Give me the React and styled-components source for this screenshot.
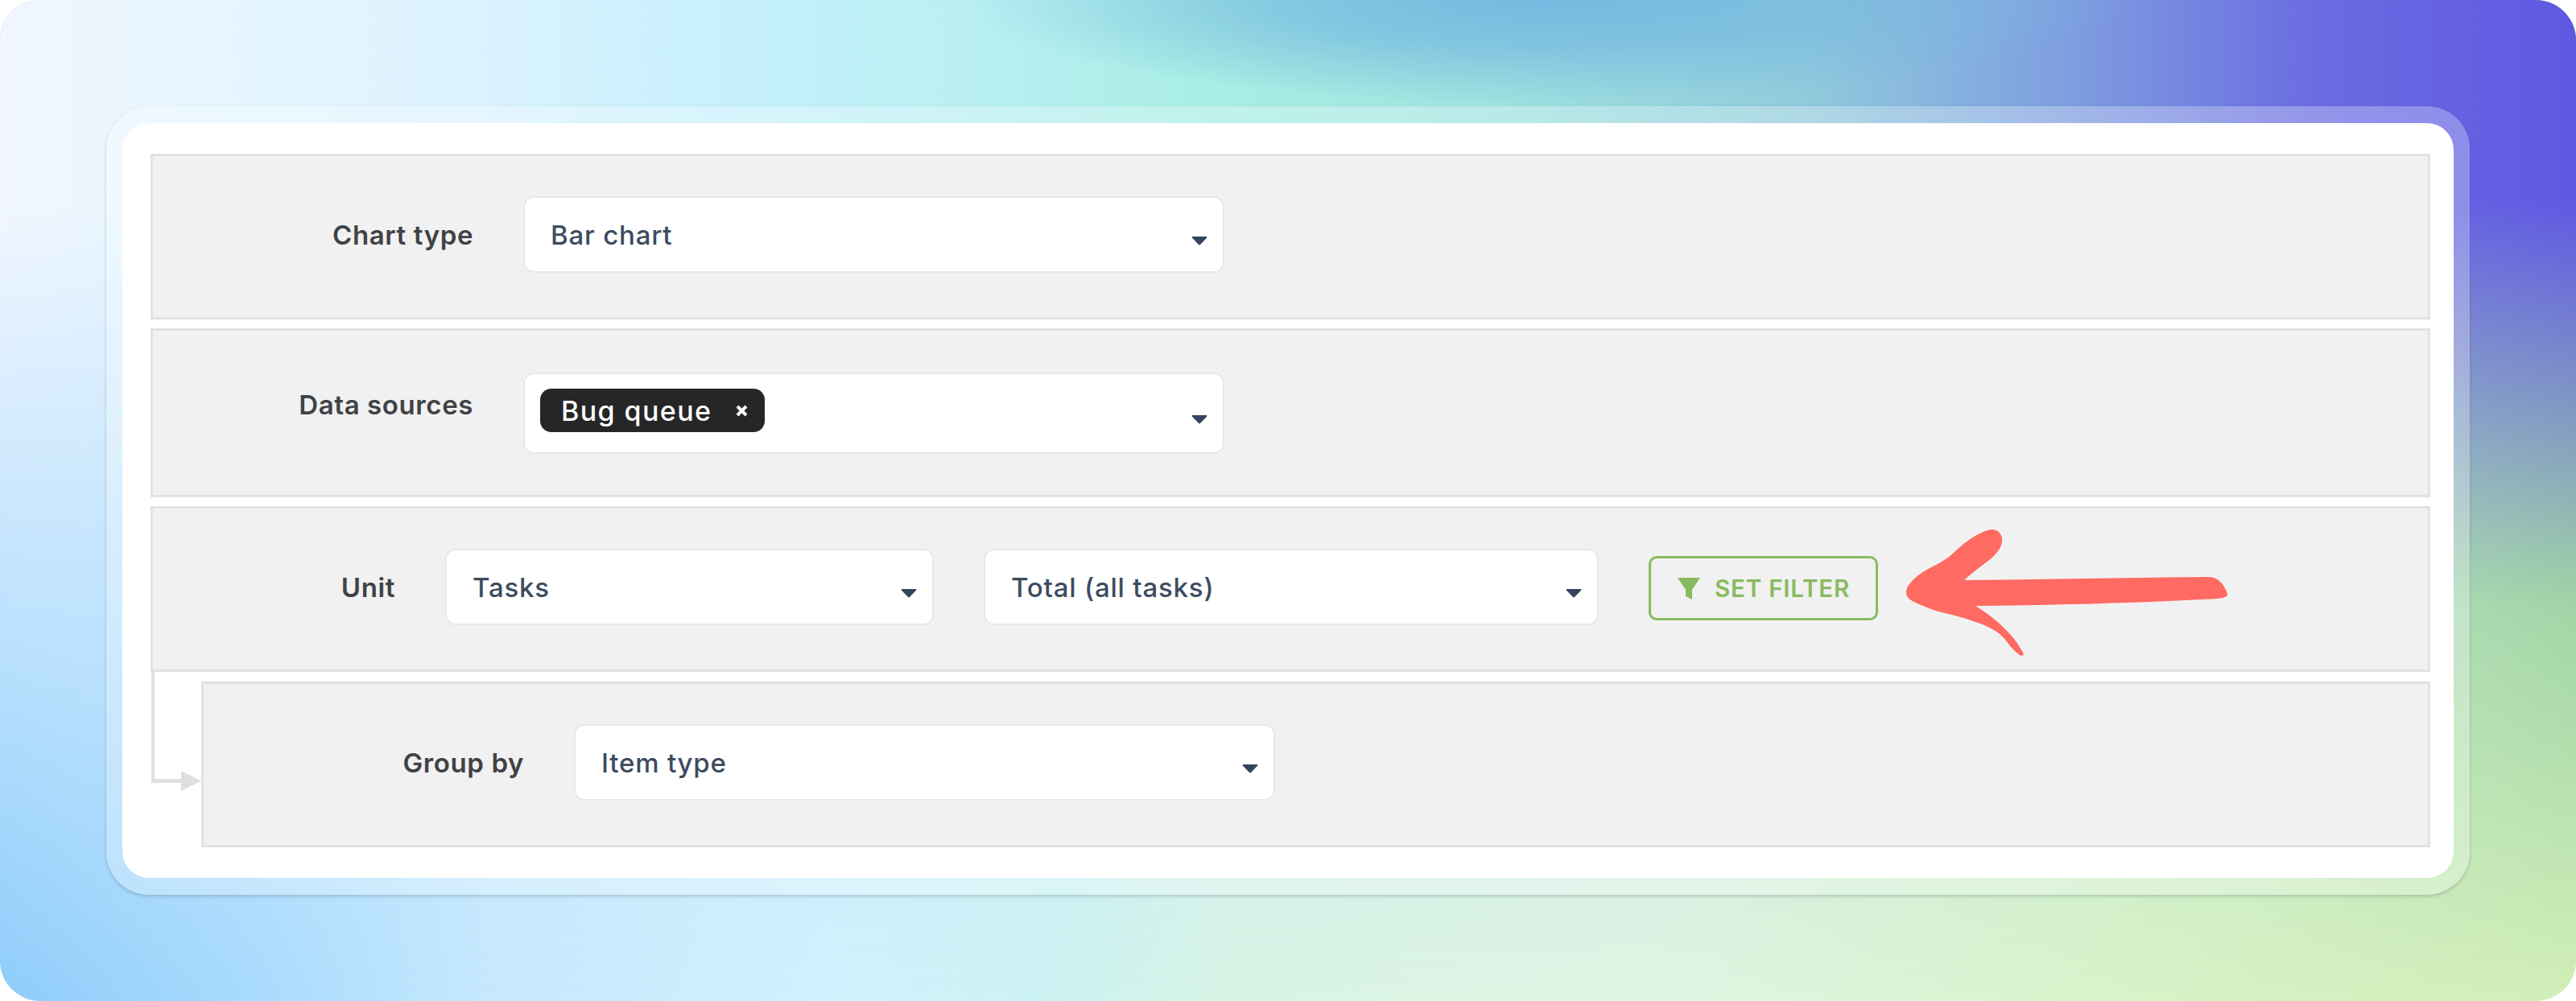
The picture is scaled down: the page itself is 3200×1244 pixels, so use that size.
import React from 'react';
import styled, { createGlobalStyle } from 'styled-components';

const GlobalStyle = createGlobalStyle`
  html, body {
    margin: 0;
    padding: 0;
    background: #fff;
    font-family: Inter, 'Noto Sans', sans-serif;
  }
`;

// backdrop: three horizontal colour bands faded into each other top to bottom
const Page = styled.div`
  position: relative;
  box-sizing: border-box;
  width: 3200px;
  height: 1244px;
  padding: 132px;
  border-radius: 50px;
  overflow: hidden;
  background: linear-gradient(90deg, #8ecdfa 0%, #a9dbfd 10%, #c6e9fe 19%, #d0f2fe 32%, #ccf3f2 41%, #d8f4e4 48%, #e0f5e4 64%, #d8f3c8 83%, #d2efb8 100%);

  &::before {
    content: '';
    position: absolute;
    inset: 0;
    background: linear-gradient(90deg, #bfe2fe 0%, #c8e9fe 20%, #cfeef5 50%, #bfe6c8 85%, #a0d4a6 100%);
    mask-image: linear-gradient(to bottom, #000 0, #000 750px, transparent 1244px);
  }

  &::after {
    content: '';
    position: absolute;
    inset: 0;
    background:
      radial-gradient(ellipse 720px 130px at 60% 0, #76b9e0 0%, rgba(118, 185, 224, 0.7) 45%, rgba(118, 185, 224, 0) 100%),
      linear-gradient(90deg, #f1f6ff 0%, #e6f6ff 8%, #dcf3ff 18%, #c9f0fd 27%, #b8eff2 38%, #a8eee4 47%, #9fe2df 58%, #90cbdc 70%, #7f9fe0 80%, #6a6ce2 90%, #5f58e2 100%);
    mask-image: linear-gradient(to bottom, #000 0, #000 250px, transparent 750px);
  }
`;

const Frame = styled.div`
  position: relative;
  z-index: 1;
  box-sizing: border-box;
  height: 980px;
  padding: 21px 20px;
  border-radius: 53px;
  background: rgba(255, 255, 255, 0.28);
  box-shadow: 0 2px 4px rgba(60, 90, 100, 0.28);
`;

const Card = styled.div`
  box-sizing: border-box;
  height: 100%;
  padding: 38px 29px 38px 35px;
  border-radius: 33px;
  background: #fff;
  display: flex;
  flex-direction: column;
  gap: 11px;
`;

const Row = styled.div`
  position: relative;
  box-sizing: border-box;
  display: flex;
  align-items: center;
  gap: 62px;
  padding: ${(p) => (p.$tall ? '52px 0 51px' : '50px 0 55px')};
  background: #f1f1f1;
  border: 3px solid #e2e2e2;
`;

const SubWrap = styled.div`
  position: relative;
  margin-top: 1px;
  padding-left: 63px;
`;

const Connector = styled.svg`
  position: absolute;
  left: 0;
  top: -12px;
`;

const Arrow = styled.svg`
  position: absolute;
  left: 2170px;
  top: 18px;
`;

const Label = styled.div`
  box-sizing: border-box;
  width: ${(p) => p.$width}px;
  flex: none;
  text-align: right;
  font-size: 33px;
  font-weight: 600;
  letter-spacing: 0.6px;
  line-height: 38px;
  color: #3f4246;
  ${(p) => p.$raised && 'align-self: flex-start; margin-top: 21px;'}
`;

const Select = styled.div`
  box-sizing: border-box;
  width: ${(p) => p.$width}px;
  height: ${(p) => (p.$multi ? 101 : 95)}px;
  flex: none;
  display: flex;
  align-items: ${(p) => (p.$multi ? 'flex-start' : 'center')};
  justify-content: space-between;
  padding: ${(p) => (p.$multi ? '18px 19px 0 19px' : '0 19px 0 32px')};
  background: #fff;
  border: 2px solid #e8e8e8;
  border-radius: 13px;
`;

const Value = styled.span`
  font-size: 33px;
  font-weight: 500;
  letter-spacing: 0.8px;
  line-height: 38px;
  color: #3d4b60;
`;

const Caret = styled.svg`
  flex: none;
  margin-top: ${(p) => (p.$multi ? '32px' : '14px')};
`;

const Tag = styled.div`
  box-sizing: border-box;
  height: 54px;
  display: flex;
  align-items: center;
  gap: 30px;
  padding: 0 21px 0 26px;
  border-radius: 14px;
  background: #262626;
  color: #fff;
  font-size: 34px;
  font-weight: 500;
  letter-spacing: 1.4px;
`;

const FilterButton = styled.button`
  box-sizing: border-box;
  width: 285px;
  height: 80px;
  flex: none;
  display: flex;
  align-items: center;
  gap: 18px;
  margin-top: 2px;
  padding: 0 0 0 33px;
  background: transparent;
  border: 3px solid #8aba5e;
  border-radius: 10px;
  color: #8aba5e;
  font-family: inherit;
  font-size: 29.5px;
  font-weight: 600;
  letter-spacing: 0.8px;
`;

const CaretIcon = ({ multi }) => (
  <Caret $multi={multi} width="20" height="12" viewBox="0 0 20 12">
    <path d="M1.5 1h17c.8 0 1.2.8.7 1.4L11 11c-.5.6-1.5.6-2 0L.8 2.4C.3 1.8.7 1 1.5 1z" fill="#34445c" />
  </Caret>
);

const Dropdown = ({ width, value }) => (
  <Select $width={width}>
    <Value>{value}</Value>
    <CaretIcon />
  </Select>
);

export default function App() {
  return (
    <>
      <GlobalStyle />
      <Page>
        <Frame>
          <Card>
            <Row>
              <Label $width={398}>Chart type</Label>
              <Dropdown width={871} value="Bar chart" />
            </Row>
            <Row $tall>
              <Label $width={398} $raised>Data sources</Label>
              <Select $width={871} $multi>
                <Tag>
                  Bug queue
                  <svg width="15" height="15" viewBox="0 0 15 15">
                    <path d="M2 2l11 11M13 2L2 13" stroke="#fff" strokeWidth="4" />
                  </svg>
                </Tag>
                <CaretIcon multi />
              </Select>
            </Row>
            <Row>
              <Label $width={301}>Unit</Label>
              <Dropdown width={607} value="Tasks" />
              <Dropdown width={764} value="Total (all tasks)" />
              <FilterButton>
                <svg width="28" height="28" viewBox="0 0 28 28">
                  <path d="M0 1h28L18 16v12l-8-4V16z" fill="#8aba5e" />
                </svg>
                SET FILTER
              </FilterButton>
              <Arrow width="420" height="170" viewBox="2360 650 420 170">
                <path
                  d="M2474 658C2482 658 2488 664 2487 673C2484 692 2462 700 2440 721C2540 720 2640 718 2744 717C2756 717 2764 728 2767 738C2768 742 2762 743 2755 744C2660 749 2560 752 2454 753C2476 766 2502 788 2514 813C2511 818 2506 812 2497 803C2486 785 2470 778 2451 772C2430 764 2408 761 2399 757C2382 750 2368 746 2368 737C2368 728 2372 727 2376 721C2392 705 2412 702 2428 686C2440 674 2460 660 2474 658Z"
                  fill="#ff6a63"
                />
              </Arrow>
            </Row>
            <SubWrap>
              <Connector width="63" height="150" viewBox="0 0 63 150">
                <path d="M1 0h4v133h35v5H1z" fill="#e0e0e0" />
                <path d="M38 123l25 12.5L38 148z" fill="#e0e0e0" />
              </Connector>
              <Row>
                <Label $width={398}>Group by</Label>
                <Dropdown width={871} value="Item type" />
              </Row>
            </SubWrap>
          </Card>
        </Frame>
      </Page>
    </>
  );
}
